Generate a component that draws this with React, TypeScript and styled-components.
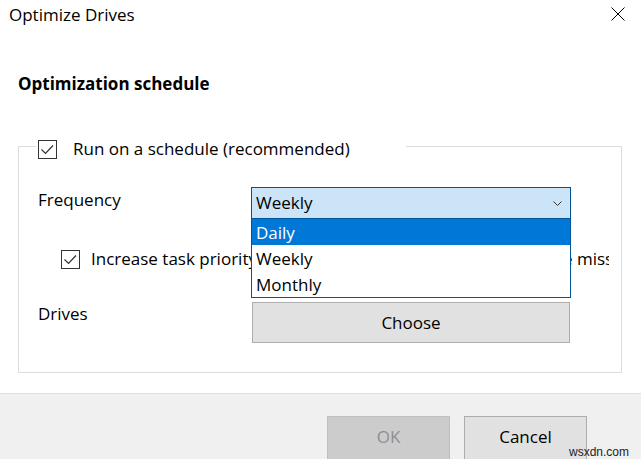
import styled, { createGlobalStyle } from "styled-components";

const GlobalStyle = createGlobalStyle`
  html, body {
    margin: 0;
    padding: 0;
    background: #ffffff;
  }
  #root {
    width: 641px;
    height: 459px;
    overflow: hidden;
  }
`;

const Window = styled.div`
  position: relative;
  width: 641px;
  height: 459px;
  display: flex;
  flex-direction: column;
  overflow: hidden;
  background: #ffffff;
  font-family: "Open Sans", "Noto Sans", sans-serif;
  font-size: 17px;
  line-height: 24px;
  color: #000000;
`;

const TitleBar = styled.div`
  height: 25px;
  display: flex;
  justify-content: space-between;
  align-items: flex-start;
  padding: 3px 16px 0 9px;
  box-sizing: border-box;
`;

const CloseButton = styled.div`
  width: 14px;
  height: 14px;
  margin-top: 4px;
  display: flex;
`;

const Body = styled.div`
  padding: 0 19px 0 18px;
`;

const Heading = styled.div`
  margin-top: 47px;
  font-weight: 700;
`;

const Group = styled.fieldset`
  margin: 35px 0 0 0;
  padding: 0 0 29px 0;
  width: 604px;
  box-sizing: border-box;
  border: 1px solid #dcdcdc;
  min-width: 0;
`;

const Legend = styled.legend`
  margin-left: 17px;
  width: 370px;
  box-sizing: border-box;
  padding: 6px 0 0 2px;
  display: flex;
  align-items: center;
  gap: 16px;
`;

const Box = styled.span`
  width: 19px;
  height: 19px;
  box-sizing: border-box;
  border: 1px solid #333333;
  background: #ffffff;
  display: inline-flex;
  flex-shrink: 0;
`;

const Content = styled.div`
  display: flex;
  flex-direction: column;
  padding: 26px 0 0 19px;
`;

const Row = styled.div<{ $top: number }>`
  display: flex;
  align-items: flex-start;
  margin-top: ${(p) => p.$top}px;
`;

const Label = styled.div<{ $offset?: number }>`
  width: 213px;
  flex-shrink: 0;
  margin-top: ${(p) => p.$offset ?? 0}px;
`;

const Combo = styled.div`
  position: relative;
  width: 320px;
  height: 32px;
  box-sizing: border-box;
  border: 1px solid #005499;
  background: #cce4f7;
  display: flex;
  align-items: center;
  justify-content: space-between;
  padding: 0 8px 0 4px;
`;

const List = styled.div`
  position: absolute;
  top: 30px;
  left: -1px;
  width: 320px;
  box-sizing: border-box;
  border: 1px solid #005499;
  background: #ffffff;
  z-index: 2;
`;

const Item = styled.div<{ $selected?: boolean }>`
  height: 26px;
  line-height: 28px;
  padding-left: 4px;
  background: ${(p) => (p.$selected ? "#0078d7" : "#ffffff")};
  color: ${(p) => (p.$selected ? "#ffffff" : "#000000")};
`;

const CheckRow = styled.div`
  display: flex;
  align-items: center;
  gap: 11px;
  margin-top: 28px;
  padding-left: 23px;
  height: 24px;
`;

const ClippedText = styled.span`
  display: block;
  width: 518px;
  white-space: nowrap;
  overflow: hidden;
`;

const Button = styled.div<{ $disabled?: boolean; $width: number; $height: number }>`
  width: ${(p) => p.$width}px;
  height: ${(p) => p.$height}px;
  box-sizing: border-box;
  border: 1px solid ${(p) => (p.$disabled ? "#bfbfbf" : "#adadad")};
  background: ${(p) => (p.$disabled ? "#cccccc" : "#e1e1e1")};
  color: ${(p) => (p.$disabled ? "#8f8f8f" : "#000000")};
  display: flex;
  justify-content: center;
  padding-top: 8px;
  flex-shrink: 0;
`;

const Footer = styled.div`
  margin-top: auto;
  height: 66px;
  box-sizing: border-box;
  border-top: 1px solid #dfdfdf;
  background: #f0f0f0;
  display: flex;
  justify-content: flex-end;
  gap: 14px;
  padding: 22px 54px 0 0;
`;

const Watermark = styled.div`
  position: absolute;
  right: 12px;
  bottom: 0px;
  font-family: "Liberation Sans", Arial, sans-serif;
  font-size: 12px;
  line-height: 14px;
  color: #222222;
`;

function Check() {
  return (
    <Box>
      <svg width="17" height="17" viewBox="0 0 17 17">
        <path d="M2.5 8.5 L6.5 12.5 L14 4.5" fill="none" stroke="#333" strokeWidth="1.2" />
      </svg>
    </Box>
  );
}

export default function App() {
  return (
    <>
      <GlobalStyle />
      <Window>
        <TitleBar>
          <span>Optimize Drives</span>
          <CloseButton>
            <svg width="14" height="14" viewBox="0 0 14 14">
              <path d="M0.5 0.5 L13.5 13.5 M13.5 0.5 L0.5 13.5" stroke="#000" strokeWidth="1" />
            </svg>
          </CloseButton>
        </TitleBar>

        <Body>
          <Heading>Optimization schedule</Heading>

          <Group>
            <Legend>
              <Check />
              <span>Run on a schedule (recommended)</span>
            </Legend>

            <Content>
              <Row $top={0}>
                <Label $offset={1}>Frequency</Label>
                <Combo>
                  <span>Weekly</span>
                  <svg width="9" height="5" viewBox="0 0 9 5">
                    <path d="M0.5 0.5 L4.5 4.5 L8.5 0.5" fill="none" stroke="#333" strokeWidth="1" />
                  </svg>
                  <List>
                    <Item $selected>Daily</Item>
                    <Item>Weekly</Item>
                    <Item>Monthly</Item>
                  </List>
                </Combo>
              </Row>

              <CheckRow>
                <Check />
                <ClippedText>
                  Increase task priority if three consecutive scheduled runs are missed
                </ClippedText>
              </CheckRow>

              <Row $top={31}>
                <Label>Drives</Label>
                <Button $width={318} $height={41} style={{ marginLeft: 1 }}>
                  Choose
                </Button>
              </Row>
            </Content>
          </Group>
        </Body>

        <Footer>
          <Button $disabled $width={123} $height={46}>
            OK
          </Button>
          <Button $width={123} $height={46}>
            Cancel
          </Button>
        </Footer>
        <Watermark>wsxdn.com</Watermark>
      </Window>
    </>
  );
}
